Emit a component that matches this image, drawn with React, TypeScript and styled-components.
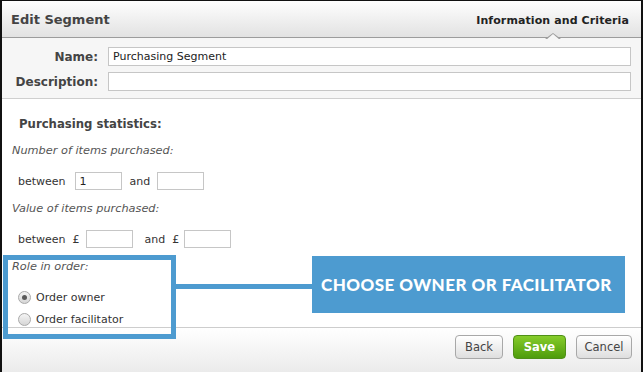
import * as React from "react";
import styled, { createGlobalStyle } from "styled-components";

const GlobalStyle = createGlobalStyle`
  html, body {
    margin: 0;
    padding: 0;
    background: #fff;
  }
`;

const accent = "#4d9bd0";

const Frame = styled.div`
  position: relative;
  width: 643px;
  height: 372px;
  box-sizing: border-box;
  border: 2px solid #111;
  border-top-width: 1px;
  border-bottom-width: 3px;
  display: flex;
  flex-direction: column;
  background: #fff;
  font-family: "DejaVu Sans", Verdana, sans-serif;
  font-size: 11px;
  color: #333;
`;

const Header = styled.div`
  position: relative;
  flex: none;
  height: 36px;
  display: flex;
  align-items: center;
  justify-content: space-between;
  padding: 0 12px 0 9px;
  background: linear-gradient(#fefefe, #e2e2e2);
  border-bottom: 1px solid #9c9c9c;
`;

const Title = styled.div`
  font-weight: bold;
  font-size: 13px;
  color: #444;
`;

const TabTitle = styled.div`
  position: relative;
  font-weight: bold;
  font-size: 11px;
  letter-spacing: 0.1px;
  color: #222;
  padding-top: 2px;

  &::before,
  &::after {
    content: "";
    position: absolute;
    left: 50%;
    width: 0;
    height: 0;
    border-style: solid;
    border-color: transparent;
  }
  &::before {
    bottom: -12px;
    margin-left: -8px;
    border-width: 0 8px 6px 8px;
    border-bottom-color: #9c9c9c;
  }
  &::after {
    bottom: -13px;
    margin-left: -7px;
    border-width: 0 7px 6px 7px;
    border-bottom-color: #f6f6f6;
  }
`;

const Details = styled.div`
  flex: none;
  height: 61px;
  box-sizing: border-box;
  padding: 9px 10px 0 0;
  background: #f6f6f6;
  border-bottom: 1px solid #cfcfcf;
  display: grid;
  grid-template-columns: 96px 1fr;
  grid-auto-rows: 19px;
  column-gap: 10px;
  row-gap: 6px;
`;

const FieldLabel = styled.label`
  justify-self: end;
  align-self: center;
  font-weight: bold;
  font-size: 12px;
  color: #444;
`;

const TextInput = styled.input<{ $w?: number }>`
  box-sizing: border-box;
  height: ${(p) => (p.$w ? 18 : 19)}px;
  width: ${(p) => (p.$w ? `${p.$w}px` : "100%")};
  margin: 0;
  padding: 0 4px;
  border: 1px solid #c6c6c6;
  background: #fff;
  font-family: inherit;
  font-size: 11px;
  color: #222;
  outline: none;
`;

const Body = styled.div`
  flex: 1;
  display: flex;
  flex-direction: column;
  padding-left: 10px;
`;

const SectionTitle = styled.div`
  margin: 17px 0 0 7px;
  line-height: 16px;
  font-weight: bold;
  font-size: 11.7px;
  color: #444;
`;

const Caption = styled.div<{ $top: number }>`
  margin-top: ${(p) => p.$top}px;
  line-height: 16px;
  font-style: italic;
  font-size: 11.3px;
  color: #555;
`;

const RangeRow = styled.div`
  margin: 13px 0 0 6px;
  height: 18px;
  display: flex;
  align-items: center;
  color: #333;
`;

const Word = styled.span<{ $before?: number; $gap: number }>`
  margin-left: ${(p) => p.$before ?? 0}px;
  margin-right: ${(p) => p.$gap}px;
`;

const RadioRow = styled.label<{ $top: number }>`
  margin: ${(p) => p.$top}px 0 0 6px;
  height: 16px;
  display: flex;
  align-items: center;
  gap: 5px;
  color: #333;
`;

const RadioDot = styled.span<{ $checked?: boolean }>`
  position: relative;
  width: 11px;
  height: 11px;
  border-radius: 50%;
  border: 1px solid #a9a9a9;
  background: linear-gradient(#f4f4f4, #d6d6d6);

  &::after {
    content: "";
    display: ${(p) => (p.$checked ? "block" : "none")};
    position: absolute;
    left: 3px;
    top: 3px;
    width: 5px;
    height: 5px;
    border-radius: 50%;
    background: #5a5a5a;
  }
`;

const Footer = styled.div`
  flex: none;
  height: 37px;
  border-top: 1px solid #cdcdcd;
  background: linear-gradient(#ffffff, #ebebeb);
  display: flex;
  justify-content: flex-end;
  align-items: flex-start;
  gap: 10px;
  padding: 7px 9px 0 0;
`;

const Button = styled.button<{ $primary?: boolean; $w: number }>`
  width: ${(p) => p.$w}px;
  height: 24px;
  padding: 0;
  border-radius: 4px;
  font-family: inherit;
  font-size: 11.5px;
  cursor: pointer;
  border: 1px solid ${(p) => (p.$primary ? "#4f8f17" : "#a8a8a8")};
  color: ${(p) => (p.$primary ? "#fff" : "#444")};
  font-weight: ${(p) => (p.$primary ? "bold" : "normal")};
  background: ${(p) =>
    p.$primary
      ? "linear-gradient(#86cc2a, #4e9c0c)"
      : "linear-gradient(#ffffff, #dedede)"};
`;

const Highlight = styled.div`
  position: absolute;
  left: 1px;
  top: 254px;
  width: 173px;
  height: 84px;
  box-sizing: border-box;
  border: 5px solid ${accent};
  pointer-events: none;
`;

const Connector = styled.div`
  position: absolute;
  left: 174px;
  top: 283px;
  width: 137px;
  height: 5px;
  background: ${accent};
`;

const Callout = styled.div`
  position: absolute;
  left: 310px;
  top: 255px;
  width: 313px;
  height: 57px;
  box-sizing: border-box;
  padding-left: 9px;
  display: flex;
  align-items: center;
  background: ${accent};
  color: #fff;
  font-family: Lato, "Open Sans", sans-serif;
  font-weight: 900;
  font-size: 17px;
  letter-spacing: 0.45px;
  text-transform: uppercase;
`;

export default function App() {
  return (
    <>
      <GlobalStyle />
      <Frame>
        <Header>
          <Title>Edit Segment</Title>
          <TabTitle>Information and Criteria</TabTitle>
        </Header>

        <Details>
          <FieldLabel>Name:</FieldLabel>
          <TextInput defaultValue="Purchasing Segment" />
          <FieldLabel>Description:</FieldLabel>
          <TextInput />
        </Details>

        <Body>
          <SectionTitle>Purchasing statistics:</SectionTitle>

          <Caption $top={11}>Number of items purchased:</Caption>
          <RangeRow>
            <Word $gap={9}>between</Word>
            <TextInput $w={47} defaultValue="1" />
            <Word $before={8} $gap={7}>and</Word>
            <TextInput $w={47} />
          </RangeRow>

          <Caption $top={11}>Value of items purchased:</Caption>
          <RangeRow>
            <Word $gap={6}>between&nbsp; £</Word>
            <TextInput $w={47} />
            <Word $before={12} $gap={5}>and&nbsp; £</Word>
            <TextInput $w={47} />
          </RangeRow>

          <Caption $top={11}>Role in order:</Caption>
          <RadioRow $top={14}>
            <RadioDot $checked />
            Order owner
          </RadioRow>
          <RadioRow $top={6}>
            <RadioDot />
            Order facilitator
          </RadioRow>
        </Body>

        <Footer>
          <Button $w={48}>Back</Button>
          <Button $w={53} $primary>
            Save
          </Button>
          <Button $w={56}>Cancel</Button>
        </Footer>

        <Highlight />
        <Connector />
        <Callout>Choose owner or facilitator</Callout>
      </Frame>
    </>
  );
}
